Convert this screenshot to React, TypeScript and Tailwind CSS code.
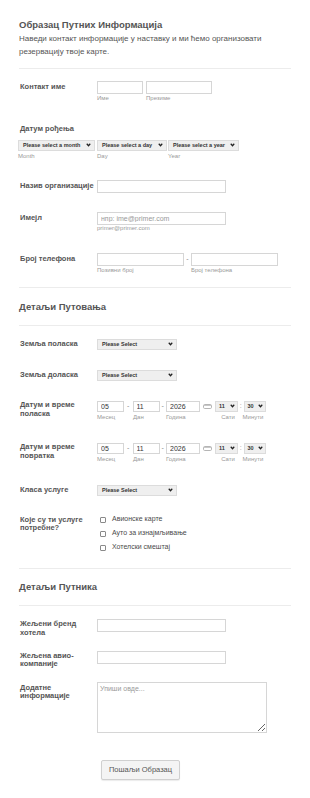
import React from 'react'

function Chevron() {
	return (
		<svg width="5" height="4" viewBox="0 0 10 8" className="shrink-0">
			<path d="M1.5 1.5 L5 5.5 L8.5 1.5" fill="none" stroke="#222" strokeWidth="2.4" />
		</svg>
	)
}

function Select({ text, w, small }: { text: string; w: string; small?: boolean }) {
	return (
		<div
			className={`flex h-[11px] shrink-0 items-center justify-between border border-[#dcdcdc] bg-[#efefef] font-bold text-[#333] ${
				small ? 'pl-[3px] pr-[2px] text-[5.5px]' : 'pl-[4px] pr-[3px] text-[5.5px]'
			} ${w}`}
		>
			<span className="whitespace-nowrap">{text}</span>
			<Chevron />
		</div>
	)
}

function TextBox({ w, placeholder, value }: { w: string; placeholder?: string; value?: string }) {
	return (
		<input
			className={`block h-[13px] shrink-0 border border-[#d6d6d6] bg-white px-[3px] text-[7px] text-[#333] outline-none placeholder:text-[#9a9a9a] ${w}`}
			placeholder={placeholder}
			defaultValue={value}
		/>
	)
}

function Sub({ children, w }: { children: React.ReactNode; w?: string }) {
	return <div className={`shrink-0 text-[6px] leading-[7px] text-[#999] ${w ?? ''}`}>{children}</div>
}

function Label({ children, pt }: { children: React.ReactNode; pt: string }) {
	return (
		<div className={`w-[78px] shrink-0 pl-px pr-px text-[7.5px] font-bold leading-[8.5px] text-[#555] ${pt}`}>
			{children}
		</div>
	)
}

function Divider({ mt }: { mt: string }) {
	return <div className={`h-px bg-[#ececec] ${mt}`} />
}

function CalIcon() {
	return (
		<svg width="9" height="5" viewBox="0 0 9 5" className="mx-[3px] shrink-0">
			<rect x="0.5" y="0.5" width="8" height="4" rx="1.2" fill="#fff" stroke="#b5b5b5" />
			<line x1="1" y1="1.5" x2="8" y2="1.5" stroke="#c8c8c8" />
		</svg>
	)
}

function DateTime() {
	return (
		<div>
			<div className="flex items-center">
				<input
					className="block h-[11px] w-[27px] shrink-0 border border-[#d6d6d6] px-[3px] text-[7px] text-[#333] outline-none"
					defaultValue="05"
				/>
				<span className="w-[8.5px] text-center text-[7px] text-[#888]">-</span>
				<input
					className="block h-[11px] w-[27px] shrink-0 border border-[#d6d6d6] px-[3px] text-[7px] text-[#333] outline-none"
					defaultValue="11"
				/>
				<span className="w-[6.5px] text-center text-[7px] text-[#888]">-</span>
				<input
					className="block h-[11px] w-[34px] shrink-0 border border-[#d6d6d6] px-[3px] text-[7px] text-[#333] outline-none"
					defaultValue="2026"
				/>
				<CalIcon />
				<Select text="11" w="w-[23px]" small />
				<span className="w-[5.5px] text-center text-[7px] text-[#999]">:</span>
				<Select text="30" w="w-[22px]" small />
			</div>
			<div className="mt-[2px] flex">
				<Sub w="w-[36px]">Месец</Sub>
				<Sub w="w-[33px]">Дан</Sub>
				<Sub w="w-[48px]">Година</Sub>
				<Sub w="w-[28px] text-center">Сати</Sub>
				<Sub w="w-[22px] text-center">Минути</Sub>
			</div>
		</div>
	)
}

export default function App() {
	return (
		<div className="min-h-screen bg-white font-['Liberation_Sans',Arial,sans-serif] text-[#555]">
			<div className="px-[19px] pt-[18px] pb-[19px]">
				<h1 className="text-[9.5px] font-bold leading-[14px] text-[#555]">Образац Путних Информација</h1>
				<p className="text-[8px] leading-[13px] text-[#555]">
					Наведи контакт информације у наставку и ми ћемо организовати резервацију твоје карте.
				</p>
				<Divider mt="mt-[10px]" />

				{/* контакт */}
				<div className="mt-[12px] flex">
					<Label pt="pt-[2px]">Контакт име</Label>
					<div>
						<div className="flex gap-[3px]">
							<TextBox w="w-[46px]" />
							<TextBox w="w-[66px]" />
						</div>
						<div className="mt-px flex gap-[3px]">
							<Sub w="w-[46px]">Име</Sub>
							<Sub>Презиме</Sub>
						</div>
					</div>
				</div>

				<div className="mt-[23px] pl-px text-[7.5px] font-bold leading-[8.5px] text-[#555]">Датум рођења</div>
				<div className="-ml-px mt-[6px] flex">
					<Select text="Please select a month" w="w-[77px]" />
					<div className="w-[2px]" />
					<Select text="Please select a day" w="w-[70px]" />
					<div className="w-px" />
					<Select text="Please select a year" w="w-[71px]" />
				</div>
				<div className="-ml-px mt-[2px] flex">
					<Sub w="w-[79px]">Month</Sub>
					<Sub w="w-[71px]">Day</Sub>
					<Sub>Year</Sub>
				</div>

				<div className="mt-[20px] flex">
					<Label pt="pt-[2px]">
						<span className="whitespace-nowrap">Назив организације</span>
					</Label>
					<TextBox w="w-[129px]" />
				</div>

				<div className="mt-[19px] flex">
					<Label pt="pt-[2px]">Имејл</Label>
					<div>
						<TextBox w="w-[129px]" placeholder="нпр: ime@primer.com" />
						<Sub>primer@primer.com</Sub>
					</div>
				</div>

				<div className="mt-[21px] flex">
					<Label pt="pt-[2px]">Број телефона</Label>
					<div>
						<div className="flex items-center">
							<TextBox w="w-[87px]" />
							<span className="w-[7px] text-center text-[7px] text-[#888]">-</span>
							<TextBox w="w-[87px]" />
						</div>
						<div className="mt-px flex">
							<Sub w="w-[94px]">Позивни број</Sub>
							<Sub>Број телефона</Sub>
						</div>
					</div>
				</div>

				<Divider mt="mt-[13px]" />
				<h2 className="mt-[12px] text-[9.5px] font-bold leading-[14px] text-[#555]">Детаљи Путовања</h2>
				<Divider mt="mt-[11px]" />

				<div className="mt-[13px] flex">
					<Label pt="pt-px">Земља поласка</Label>
					<Select text="Please Select" w="w-[80px]" />
				</div>

				<div className="mt-[20px] flex">
					<Label pt="pt-px">Земља доласка</Label>
					<Select text="Please Select" w="w-[80px]" />
				</div>

				<div className="mt-[20px] flex">
					<Label pt="pt-[0.5px]">Датум и време поласка</Label>
					<DateTime />
				</div>

				<div className="mt-[22px] flex">
					<Label pt="pt-[0.5px]">Датум и време повратка</Label>
					<DateTime />
				</div>

				<div className="mt-[22px] flex">
					<Label pt="pt-px">Класа услуге</Label>
					<Select text="Please Select" w="w-[80px]" />
				</div>

				<div className="mt-[16px] flex">
					<Label pt="pt-[4px]">
						Које су ти услуге
						<br />
						потребне?
					</Label>
					<div className="pl-[3px] pt-px">
						{['Авионске карте', 'Ауто за изнајмљивање', 'Хотелски смештај'].map(item => (
							<div key={item} className="flex h-[14px] items-center gap-[6px]">
								<div className="h-[6px] w-[6px] rounded-[1px] border border-[#8a8a8a] bg-white" />
								<span className="text-[7px] text-[#4a4a4a]">{item}</span>
							</div>
						))}
					</div>
				</div>

				<Divider mt="mt-[13px]" />
				<h2 className="mt-[11px] text-[9.5px] font-bold leading-[14px] text-[#555]">Детаљи Путника</h2>
				<Divider mt="mt-[11px]" />

				<div className="mt-[13px] flex">
					<Label pt="pt-[1.5px]">
						Жељени бренд
						<br />
						хотела
					</Label>
					<TextBox w="w-[129px]" />
				</div>

				<div className="mt-[13.5px] flex">
					<Label pt="pt-px">
						Жељена авио-
						<br />
						компаније
					</Label>
					<TextBox w="w-[129px]" />
				</div>

				<div className="mt-[13px] flex">
					<Label pt="pt-[2px]">
						Додатне
						<br />
						информације
					</Label>
					<textarea
						className="block h-[51px] w-[170px] border border-[#d6d6d6] px-[2px] py-px text-[7px] text-[#333] outline-none placeholder:text-[#9a9a9a]"
						placeholder="Упиши овде..."
					/>
				</div>

				<div className="mt-[27px] pl-[82px]">
					<button className="block h-[20px] w-[79px] rounded-[2px] border border-[#d0d0d0] bg-[#f4f4f4] text-[7.5px] text-[#555] shadow-[0_1px_1px_rgba(0,0,0,0.08)]">
						Пошаљи Образац
					</button>
				</div>
			</div>
		</div>
	)
}
